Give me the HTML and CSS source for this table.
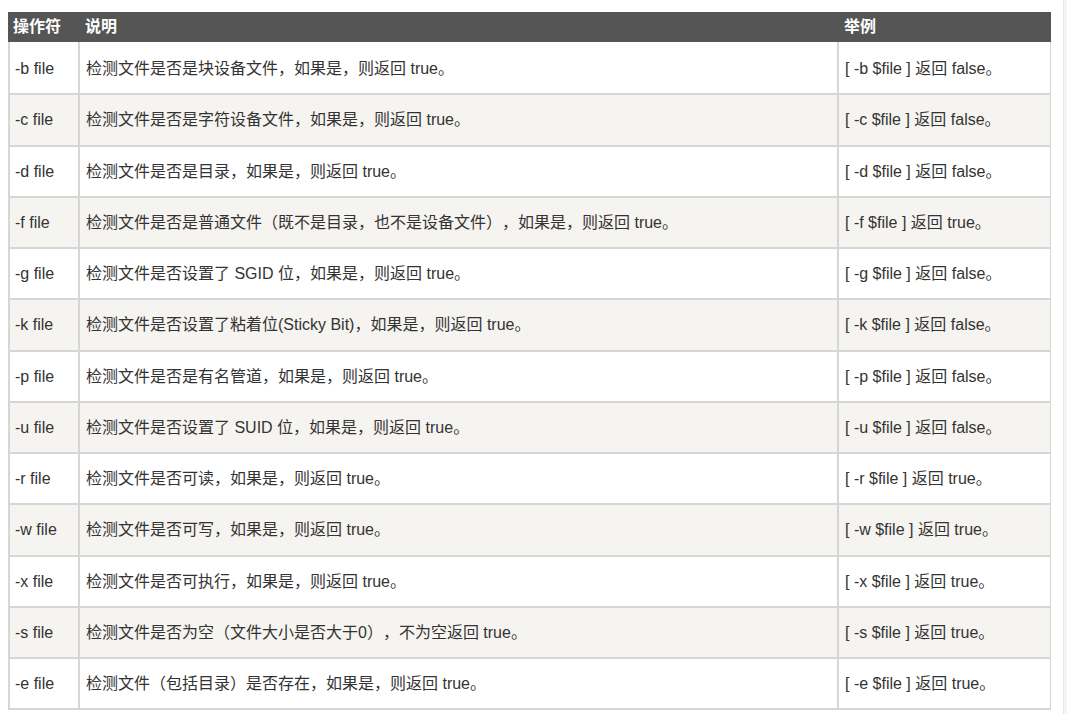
FILE: index.html
```html
<!DOCTYPE html>
<html lang="zh-CN">
<head>
<meta charset="utf-8">
<title>文件测试运算符</title>
<link rel="stylesheet" href="styles.css">
</head>
<body>
<div class="page">
  <main class="content">
    <table class="reference">
      <colgroup>
        <col class="c1">
        <col class="c2">
        <col class="c3">
      </colgroup>
      <thead>
        <tr><th>操作符</th><th>说明</th><th>举例</th></tr>
      </thead>
      <tbody>
        <tr><td>-b file</td><td>检测文件是否是块设备文件，如果是，则返回 true。</td><td>[ -b $file ] 返回 false。</td></tr>
        <tr><td>-c file</td><td>检测文件是否是字符设备文件，如果是，则返回 true。</td><td>[ -c $file ] 返回 false。</td></tr>
        <tr><td>-d file</td><td>检测文件是否是目录，如果是，则返回 true。</td><td>[ -d $file ] 返回 false。</td></tr>
        <tr><td>-f file</td><td>检测文件是否是普通文件（既不是目录，也不是设备文件），如果是，则返回 true。</td><td>[ -f $file ] 返回 true。</td></tr>
        <tr><td>-g file</td><td>检测文件是否设置了 SGID 位，如果是，则返回 true。</td><td>[ -g $file ] 返回 false。</td></tr>
        <tr><td>-k file</td><td>检测文件是否设置了粘着位(Sticky Bit)，如果是，则返回 true。</td><td>[ -k $file ] 返回 false。</td></tr>
        <tr><td>-p file</td><td>检测文件是否是有名管道，如果是，则返回 true。</td><td>[ -p $file ] 返回 false。</td></tr>
        <tr><td>-u file</td><td>检测文件是否设置了 SUID 位，如果是，则返回 true。</td><td>[ -u $file ] 返回 false。</td></tr>
        <tr><td>-r file</td><td>检测文件是否可读，如果是，则返回 true。</td><td>[ -r $file ] 返回 true。</td></tr>
        <tr><td>-w file</td><td>检测文件是否可写，如果是，则返回 true。</td><td>[ -w $file ] 返回 true。</td></tr>
        <tr><td>-x file</td><td>检测文件是否可执行，如果是，则返回 true。</td><td>[ -x $file ] 返回 true。</td></tr>
        <tr><td>-s file</td><td>检测文件是否为空（文件大小是否大于0），不为空返回 true。</td><td>[ -s $file ] 返回 true。</td></tr>
        <tr><td>-e file</td><td>检测文件（包括目录）是否存在，如果是，则返回 true。</td><td>[ -e $file ] 返回 true。</td></tr>
      </tbody>
    </table>
  </main>
  <div class="strip"></div>
</div>
</body>
</html>
```

FILE: styles.css
```css
html, body {
  margin: 0;
  padding: 0;
  background: #ffffff;
}

body {
  font-family: "Liberation Sans", "Noto Sans CJK SC", sans-serif;
  font-size: 16px;
  color: #333333;
  text-spacing-trim: space-all;
}

.page {
  display: flex;
  min-height: 714px;
}

.content {
  flex: 1;
  padding: 12px 0 0 8px;
}

.strip {
  width: 3px;
  background: #f3f3f3;
  border-left: 1px solid #e6e6e6;
}

.reference {
  border-collapse: separate;
  border-spacing: 0;
  table-layout: fixed;
  width: 1043px;
}

.reference col.c1 { width: 72px; }
.reference col.c2 { width: 759px; }
.reference col.c3 { width: 212px; }

.reference th {
  background: #555555;
  color: #ffffff;
  font-weight: bold;
  text-align: left;
  height: 30px;
  padding: 0 5px;
  line-height: 30px;
  box-sizing: border-box;
}

.reference td {
  padding: 14px 6px 14px 5px;
  line-height: 21.25px;
  border-bottom: 2px solid #d6d6d6;
  border-right: 2px solid #d6d6d6;
  white-space: nowrap;
  vertical-align: middle;
}

.reference tbody tr:first-child td {
  padding-top: 16px;
}

.reference td:first-child {
  border-left: 2px solid #d6d6d6;
}

.reference td:nth-child(2),
.reference td:nth-child(3) {
  padding-left: 6px;
}

.reference td:last-child {
  border-right: 1px solid #d6d6d6;
}

.reference tbody tr:nth-child(even) td {
  background: #f6f4f0;
}
```
